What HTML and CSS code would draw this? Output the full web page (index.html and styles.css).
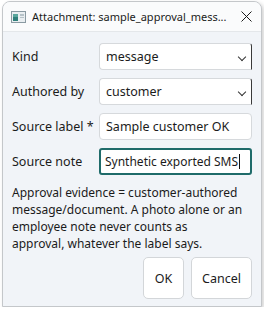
FILE: index.html
```html
<!DOCTYPE html>
<html lang="en">
<head>
  <meta charset="UTF-8" />
  <title>Attachment</title>
  <link rel="stylesheet" href="styles.css">
</head>
<body>

  <div class="window">
    <div class="titlebar">
      <svg class="app-icon" width="15" height="12" viewBox="0 0 15 12">
        <rect x="0.5" y="0.5" width="14" height="11" fill="#e9eef1" stroke="#8a9aa2"/>
        <rect x="2" y="3" width="5" height="7" fill="#2f7f7a"/>
        <rect x="2" y="3" width="5" height="3" fill="#58a59c"/>
        <rect x="9" y="3" width="4" height="2" fill="#b6c2c8"/>
        <rect x="9" y="6" width="4" height="1" fill="#b6c2c8"/>
      </svg>
      <span class="title">Attachment: sample_approval_mess...</span>
      <svg class="close" width="11" height="11" viewBox="0 0 11 11">
        <path d="M0.5 0.5 L10.5 10.5 M10.5 0.5 L0.5 10.5" stroke="#1b1b1b" stroke-width="1"/>
      </svg>
    </div>

    <div class="content">
      <div class="form">
        <label>Kind</label>
        <div class="combo"><span>message</span><i class="chev"></i></div>

        <label>Authored by</label>
        <div class="combo"><span>customer</span><i class="chev"></i></div>

        <label>Source label *</label>
        <div class="field"><span>Sample customer OK</span></div>

        <label>Source note</label>
        <div class="field focused"><span>Synthetic exported SMS</span><i class="caret"></i></div>
      </div>

      <p class="note">Approval evidence = customer-authored message/document. A photo alone or an employee note never counts as<br>approval, whatever the label says.</p>

      <div class="buttons">
        <button class="btn ok">OK</button>
        <button class="btn cancel">Cancel</button>
      </div>
    </div>
  </div>

</body>
</html>
```

FILE: styles.css
```css
* { box-sizing: border-box; }
body {
  margin: 0;
  background: #ffffff;
  font-family: 'Noto Sans', 'DejaVu Sans', sans-serif;
  font-size: 12px;
  color: #1b1b1b;
}
.window {
  width: 260px;
  height: 306px;
  margin: 1px 0 0 2px;
  border: 1px solid #c4c7ca;
  border-radius: 8px 8px 0 0;
  background: #f1f4f8;
  box-shadow: 2px 2px 4px rgba(0,0,0,0.18);
  overflow: hidden;
}
.titlebar {
  height: 30px;
  background: #fafbfc;
  border-bottom: 1px solid #e4e7ea;
  display: flex;
  align-items: center;
  padding: 0 8px 0 8px;
}
.app-icon { flex: none; margin-top: 1px; }
.title {
  flex: 1;
  margin-left: 6px;
  font-size: 11px;
  white-space: nowrap;
  overflow: hidden;
}
.close { flex: none; margin-right: 1px; }
.content {
  padding: 11px 9px 0 9px;
}
.form {
  display: grid;
  grid-template-columns: 87px 1fr;
  grid-auto-rows: 27px;
  row-gap: 8px;
  align-items: center;
}
.form label { font-size: 12.5px; }
.combo, .field {
  position: relative;
  height: 100%;
  background: #fff;
  border: 1px solid #d6d9dc;
  border-radius: 4px;
  display: flex;
  align-items: center;
  padding: 0 6px;
  font-size: 12.5px;
  white-space: nowrap;
  overflow: hidden;
}
.combo {
  border-right-color: #3a3a3a;
  border-top-right-radius: 3px;
  border-bottom-right-radius: 0;
}
.combo::after {
  content: "";
  position: absolute;
  right: -1px;
  bottom: -1px;
  width: 15px;
  border-bottom: 1px solid #3a3a3a;
}
.chev {
  position: absolute;
  right: 6px;
  top: 10px;
  width: 6px;
  height: 6px;
  border-right: 1.3px solid #333;
  border-bottom: 1.3px solid #333;
  transform: rotate(45deg);
}
.field.focused {
  border: 2px solid #1f6b6a;
  border-radius: 3px;
  padding: 0 4px;
  font-size: 12px;
}
.caret {
  display: inline-block;
  flex: none;
  width: 1px;
  height: 15px;
  background: #111;
  margin-left: 1px;
}
.note {
  margin: 9px 0 0 0;
  font-size: 12px;
  line-height: 17px;
}
.buttons {
  display: flex;
  justify-content: flex-end;
  gap: 7px;
  margin-top: 5px;
}
.btn {
  height: 42px;
  background: #fff;
  border: 1px solid #d3d6d9;
  border-radius: 5px;
  font-family: inherit;
  font-size: 12.5px;
  color: #1b1b1b;
  padding: 0;
}
.ok { width: 41px; }
.cancel { width: 61px; }
```
